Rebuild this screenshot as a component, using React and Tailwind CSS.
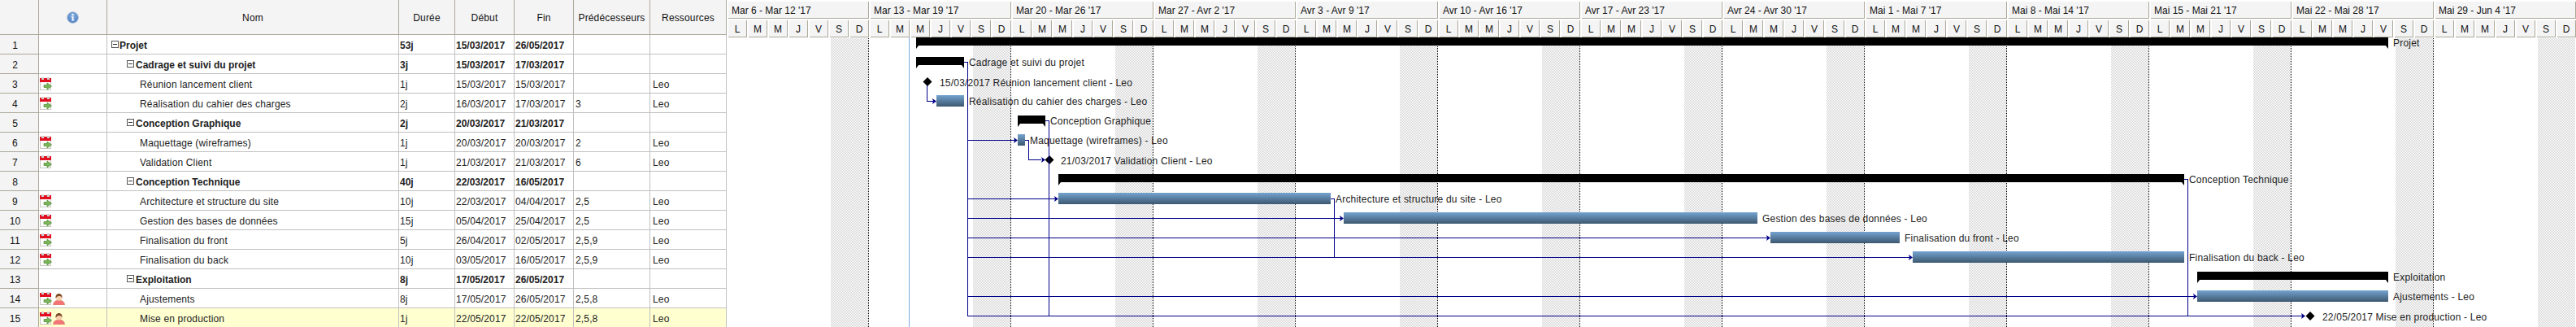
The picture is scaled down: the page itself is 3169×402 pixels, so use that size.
import React from "react";

const ROWS = [
  { n: 1, name: "Projet", level: 0, dur: "53j", start: "15/03/2017", end: "26/05/2017", pred: "", res: "", bold: true, icons: 0 },
  { n: 2, name: "Cadrage et suivi du projet", level: 1, dur: "3j", start: "15/03/2017", end: "17/03/2017", pred: "", res: "", bold: true, icons: 0 },
  { n: 3, name: "Réunion lancement client", level: 2, dur: "1j", start: "15/03/2017", end: "15/03/2017", pred: "", res: "Leo", bold: false, icons: 1 },
  { n: 4, name: "Réalisation du cahier des charges", level: 2, dur: "2j", start: "16/03/2017", end: "17/03/2017", pred: "3", res: "Leo", bold: false, icons: 1 },
  { n: 5, name: "Conception Graphique", level: 1, dur: "2j", start: "20/03/2017", end: "21/03/2017", pred: "", res: "", bold: true, icons: 0 },
  { n: 6, name: "Maquettage (wireframes)", level: 2, dur: "1j", start: "20/03/2017", end: "20/03/2017", pred: "2", res: "Leo", bold: false, icons: 1 },
  { n: 7, name: "Validation Client", level: 2, dur: "1j", start: "21/03/2017", end: "21/03/2017", pred: "6", res: "Leo", bold: false, icons: 1 },
  { n: 8, name: "Conception Technique", level: 1, dur: "40j", start: "22/03/2017", end: "16/05/2017", pred: "", res: "", bold: true, icons: 0 },
  { n: 9, name: "Architecture et structure du site", level: 2, dur: "10j", start: "22/03/2017", end: "04/04/2017", pred: "2,5", res: "Leo", bold: false, icons: 1 },
  { n: 10, name: "Gestion des bases de données", level: 2, dur: "15j", start: "05/04/2017", end: "25/04/2017", pred: "2,5", res: "Leo", bold: false, icons: 1 },
  { n: 11, name: "Finalisation du front", level: 2, dur: "5j", start: "26/04/2017", end: "02/05/2017", pred: "2,5,9", res: "Leo", bold: false, icons: 1 },
  { n: 12, name: "Finalisation du back", level: 2, dur: "10j", start: "03/05/2017", end: "16/05/2017", pred: "2,5,9", res: "Leo", bold: false, icons: 1 },
  { n: 13, name: "Exploitation", level: 1, dur: "8j", start: "17/05/2017", end: "26/05/2017", pred: "", res: "", bold: true, icons: 0 },
  { n: 14, name: "Ajustements", level: 2, dur: "8j", start: "17/05/2017", end: "26/05/2017", pred: "2,5,8", res: "Leo", bold: false, icons: 2 },
  { n: 15, name: "Mise en production", level: 2, dur: "1j", start: "22/05/2017", end: "22/05/2017", pred: "2,5,8", res: "Leo", bold: false, icons: 2, hi: true },
];

const WEEKS = [
  "Mar 6 - Mar 12 '17", "Mar 13 - Mar 19 '17", "Mar 20 - Mar 26 '17", "Mar 27 - Avr 2 '17",
  "Avr 3 - Avr 9 '17", "Avr 10 - Avr 16 '17", "Avr 17 - Avr 23 '17", "Avr 24 - Avr 30 '17",
  "Mai 1 - Mai 7 '17", "Mai 8 - Mai 14 '17", "Mai 15 - Mai 21 '17", "Mai 22 - Mai 28 '17", "Mai 29 - Jun 4 '17",
];
const DAYS = ["L", "M", "M", "J", "V", "S", "D"];

const GRID = "grid grid-cols-[48px_84px_359px_69px_73px_73px_94px_94px]";

function CalendarIcon() {
  return (
    <svg width="15" height="16" viewBox="0 0 15 16" className="block shrink-0" shapeRendering="crispEdges">
      <rect x="0" y="2" width="14" height="14" fill="#c8c8c0" />
      <rect x="1" y="6" width="12" height="9" fill="#ffffff" />
      <rect x="0" y="1" width="14" height="5" fill="#e01020" />
      <rect x="2" y="0" width="3" height="3" fill="#d0d0d0" />
      <rect x="9" y="0" width="3" height="3" fill="#d0d0d0" />
      <path d="M5 9.500h4V7l5.500 4L9 15v-2.500H5z" fill="#7cb55a" stroke="#4c8a32" strokeWidth="0.7" shapeRendering="auto" />
    </svg>
  );
}

function PersonIcon() {
  return (
    <svg width="15" height="14" viewBox="0 0 15 14" className="block shrink-0 mt-[2px] ml-[1px]">
      <path d="M0.5 14c0-3.5 2-5 4.500-5.500h5c2.500.5 4.500 2 4.500 5.500z" fill="#f4737a" stroke="#d98a5a" strokeWidth="0.7" />
      <circle cx="7.500" cy="5" r="3.600" fill="#f6cfae" />
      <path d="M3.500 6C3 1.500 5.500 0 7.500 0s4.500 1.500 4 6C11 4 10 3 8.500 3 6.500 3 4.500 3.500 3.500 6z" fill="#7d4a26" />
    </svg>
  );
}

function InfoIcon() {
  return (
    <svg width="15" height="15" viewBox="0 0 15 15" className="block">
      <defs>
        <radialGradient id="infoFill" cx="50%" cy="35%" r="70%">
          <stop offset="0%" stopColor="#8db4e4" />
          <stop offset="100%" stopColor="#3f76bb" />
        </radialGradient>
      </defs>
      <circle cx="7.500" cy="7.500" r="6.800" fill="url(#infoFill)" stroke="#9db8d6" strokeWidth="1" />
      <rect x="6.500" y="3" width="2" height="2" fill="#fff" />
      <path d="M5.800 6.200h2.700v4.300h1v1H5.800v-1h1V7.200h-1z" fill="#fff" />
    </svg>
  );
}

function Expander() {
  return (
    <span className="flex h-[9px] w-[9px] shrink-0 items-center justify-center border border-[#555555] bg-white">
      <span className="h-px w-[5px] bg-[#333333]" />
    </span>
  );
}

function HeaderCell({ children }) {
  return (
    <div className="flex items-center justify-center border-r border-b border-[#aca899] bg-[#f4f4f4] text-[#111111]">
      {children}
    </div>
  );
}

function HeaderText({ children }) {
  return <span className="pt-[1px] tracking-[0.15px]">{children}</span>;
}

function NameCell({ row }) {
  if (row.level === 0) {
    return (
      <div className="flex items-center gap-[1px] pl-[5px] font-bold">
        <Expander />
        <span className="pt-[2px]">{row.name}</span>
      </div>
    );
  }
  if (row.level === 1) {
    return (
      <div className="flex items-center gap-[1px] pl-[24px] font-bold">
        <Expander />
        <span className="ml-[1px] pt-[2px]">{row.name}</span>
      </div>
    );
  }
  return <div className="flex items-center pl-[40px] pt-[2px]">{row.name}</div>;
}

function Row({ row }) {
  const lineCls = row.hi ? "bg-[#ffffd0]" : "bg-white";
  const cell = "flex items-center border-r border-b border-[#c0c0c0] pt-[2px]";
  return (
    <div className={`${GRID} h-[24px] ${row.bold ? "font-bold" : "tracking-[0.15px]"} ${lineCls}`}>
      <div className="flex items-center justify-center border-r border-b border-[#aca899] bg-[#f4f4f4] pt-[2px] pr-[10px] font-normal text-[#111111]">
        {row.n}
      </div>
      <div className="flex items-start border-r border-b border-[#c0c0c0] pt-[4px] pl-[1px]">
        {row.icons > 0 && <CalendarIcon />}
        {row.icons > 1 && <PersonIcon />}
      </div>
      <div className="grid border-r border-b border-[#c0c0c0]">
        <NameCell row={row} />
      </div>
      <div className={`${cell} pl-[1px]`}>{row.dur}</div>
      <div className={`${cell} pl-[1px]`}>{row.start}</div>
      <div className={`${cell} pl-[1px]`}>{row.end}</div>
      <div className={`${cell} pl-[2px]`}>{row.pred}</div>
      <div className={`${cell} pl-[3px]`}>{row.res}</div>
    </div>
  );
}

const SUMMARIES = [
  { row: 1, x0: 1127, x1: 2938 },
  { row: 2, x0: 1127, x1: 1186 },
  { row: 5, x0: 1252, x1: 1286 },
  { row: 8, x0: 1302, x1: 2687 },
  { row: 13, x0: 2703, x1: 2938 },
];
const TASKS = [
  { row: 4, x0: 1152, x1: 1186 },
  { row: 6, x0: 1252, x1: 1261 },
  { row: 9, x0: 1302, x1: 1637 },
  { row: 10, x0: 1653, x1: 2162 },
  { row: 11, x0: 2178, x1: 2337 },
  { row: 12, x0: 2353, x1: 2687 },
  { row: 14, x0: 2703, x1: 2938 },
];
const MILESTONES = [
  { row: 3, cx: 1141 },
  { row: 7, cx: 1291 },
  { row: 15, cx: 2842 },
];
const LABELS = [
  { row: 1, x: 2944, t: "Projet" },
  { row: 2, x: 1192, t: "Cadrage et suivi du projet" },
  { row: 3, x: 1156, t: "15/03/2017 Réunion lancement client - Leo", m: true },
  { row: 4, x: 1192, t: "Réalisation du cahier des charges - Leo" },
  { row: 5, x: 1292, t: "Conception Graphique" },
  { row: 6, x: 1267, t: "Maquettage (wireframes) - Leo" },
  { row: 7, x: 1305, t: "21/03/2017 Validation Client - Leo", m: true },
  { row: 8, x: 2693, t: "Conception Technique" },
  { row: 9, x: 1643, t: "Architecture et structure du site - Leo" },
  { row: 10, x: 2168, t: "Gestion des bases de données - Leo" },
  { row: 11, x: 2343, t: "Finalisation du front - Leo" },
  { row: 12, x: 2693, t: "Finalisation du back - Leo" },
  { row: 13, x: 2944, t: "Exploitation" },
  { row: 14, x: 2944, t: "Ajustements - Leo" },
  { row: 15, x: 2857, t: "22/05/2017 Mise en production - Leo", m: true },
];
const LINKS = [
  "M1186 76.500H1190.500V388.500",
  "M1286 148.500H1290.500V388.500",
  "M1140.500 105V124.500H1148",
  "M1190.500 172.500H1248",
  "M1261 172.500H1265.500V196.500H1281",
  "M1190.500 244.500H1298",
  "M1190.500 268.500H1649",
  "M1190.500 292.500H2174",
  "M1190.500 316.500H2349",
  "M1637 244.500H1641.500V316.500",
  "M2687 220.500H2691.500V388.500",
  "M1190.500 364.500H2699",
  "M1190.500 388.500H2832",
];
const ARROWS = [
  { x: 1152, y: 124.5 },
  { x: 1252, y: 172.5 },
  { x: 1286, y: 196.5 },
  { x: 1302, y: 244.5 },
  { x: 1653, y: 268.5 },
  { x: 2178, y: 292.5 },
  { x: 2353, y: 316.5 },
  { x: 2703, y: 364.5 },
  { x: 2836, y: 388.5 },
];

const rowTop = (r) => 43 + (r - 1) * 24;

function Chart() {
  const weeks = WEEKS.map((_, i) => i);
  return (
    <svg width="2275" height="356" viewBox="894 46 2275 356" className="block shrink-0" fontSize="12" letterSpacing="0.2">
      <defs>
        <pattern id="stipple" x="0" y="0" width="2" height="2" patternUnits="userSpaceOnUse">
          <rect width="2" height="2" fill="#ffffff" />
          <rect x="0" y="0" width="1" height="1" fill="#d4d4d4" />
          <rect x="1" y="1" width="1" height="1" fill="#d4d4d4" />
        </pattern>
        <linearGradient id="taskFill" x1="0" y1="0" x2="0" y2="1">
          <stop offset="0%" stopColor="#74a3d0" />
          <stop offset="100%" stopColor="#3d5870" />
        </linearGradient>
      </defs>

      {weeks.map((k) => (
        <rect key={k} x={1022 + k * 175} y="47" width="46" height="355" fill="url(#stipple)" />
      ))}
      {weeks.slice(0, 12).map((k) => (
        <path key={k} d={`M${1068.5 + k * 175} 47V402`} stroke="#000000" strokeWidth="1" strokeDasharray="1 1" shapeRendering="crispEdges" />
      ))}
      <path d="M1118.500 46V402" stroke="#7ba9dc" strokeWidth="1" shapeRendering="crispEdges" />

      {LABELS.map((l) => (
        <text key={l.row} x={l.x} y={rowTop(l.row) + (l.m ? 15 : 14)} fill="#222222">
          {l.t}
        </text>
      ))}

      {SUMMARIES.map((s) => {
        const y = rowTop(s.row) + 3;
        return (
          <polygon
            key={s.row}
            points={`${s.x0},${y} ${s.x1},${y} ${s.x1},${y + 14} ${s.x1 - 3},${y + 10} ${s.x0 + 3},${y + 10} ${s.x0},${y + 14}`}
            fill="#000000"
          />
        );
      })}
      {TASKS.map((t) => (
        <rect key={t.row} x={t.x0} y={rowTop(t.row) + 2} width={t.x1 - t.x0} height="14" fill="url(#taskFill)" />
      ))}
      {MILESTONES.map((m) => {
        const y = rowTop(m.row) + 9.5;
        return <polygon key={m.row} points={`${m.cx - 5.5},${y} ${m.cx},${y - 5.5} ${m.cx + 5.5},${y} ${m.cx},${y + 5.5}`} fill="#000000" />;
      })}

      {LINKS.map((d) => (
        <path key={d} d={d} fill="none" stroke="#000088" strokeWidth="1" shapeRendering="crispEdges" />
      ))}
      {ARROWS.map((a) => (
        <polygon key={a.x} points={`${a.x},${a.y} ${a.x - 5},${a.y - 3.5} ${a.x - 4},${a.y} ${a.x - 5},${a.y + 3.5}`} fill="#000088" />
      ))}
    </svg>
  );
}

export default function App() {
  return (
    <div className="flex h-[402px] w-[3169px] overflow-hidden bg-white font-['Liberation_Sans',Arial,sans-serif] text-[12px] text-[#222222]">
      <div className="w-[894px] shrink-0">
        <div className={`${GRID} h-[43px]`}>
          <HeaderCell>{""}</HeaderCell>
          <HeaderCell><InfoIcon /></HeaderCell>
          <HeaderCell><HeaderText>Nom</HeaderText></HeaderCell>
          <HeaderCell><HeaderText>Durée</HeaderText></HeaderCell>
          <HeaderCell><HeaderText>Début</HeaderText></HeaderCell>
          <HeaderCell><HeaderText>Fin</HeaderText></HeaderCell>
          <HeaderCell><HeaderText>Prédécesseurs</HeaderText></HeaderCell>
          <HeaderCell><HeaderText>Ressources</HeaderText></HeaderCell>
        </div>
        {ROWS.map((r) => (
          <Row key={r.n} row={r} />
        ))}
      </div>

      <div className="flex w-[2275px] shrink-0 flex-col overflow-hidden">
        <div className="flex h-[23px] shrink-0 pt-[2px] pl-[2px]">
          {WEEKS.map((w) => (
            <div key={w} className="mr-[2px] flex w-[173px] shrink-0 items-center border-r border-b border-[#aca899] bg-[#f4f4f4] pt-[2px] pl-[4px] text-[#111111]">
              {w}
            </div>
          ))}
        </div>
        <div className="flex h-[23px] shrink-0 pt-[2px] pl-[2px]">
          {WEEKS.map((w) =>
            DAYS.map((d, i) => (
              <div key={w + i} className="mr-[2px] flex w-[23px] shrink-0 items-center justify-center border-r border-b border-[#aca899] bg-[#f4f4f4] pt-[2px] text-[#111111]">
                {d}
              </div>
            ))
          )}
        </div>
        <Chart />
      </div>
    </div>
  );
}
